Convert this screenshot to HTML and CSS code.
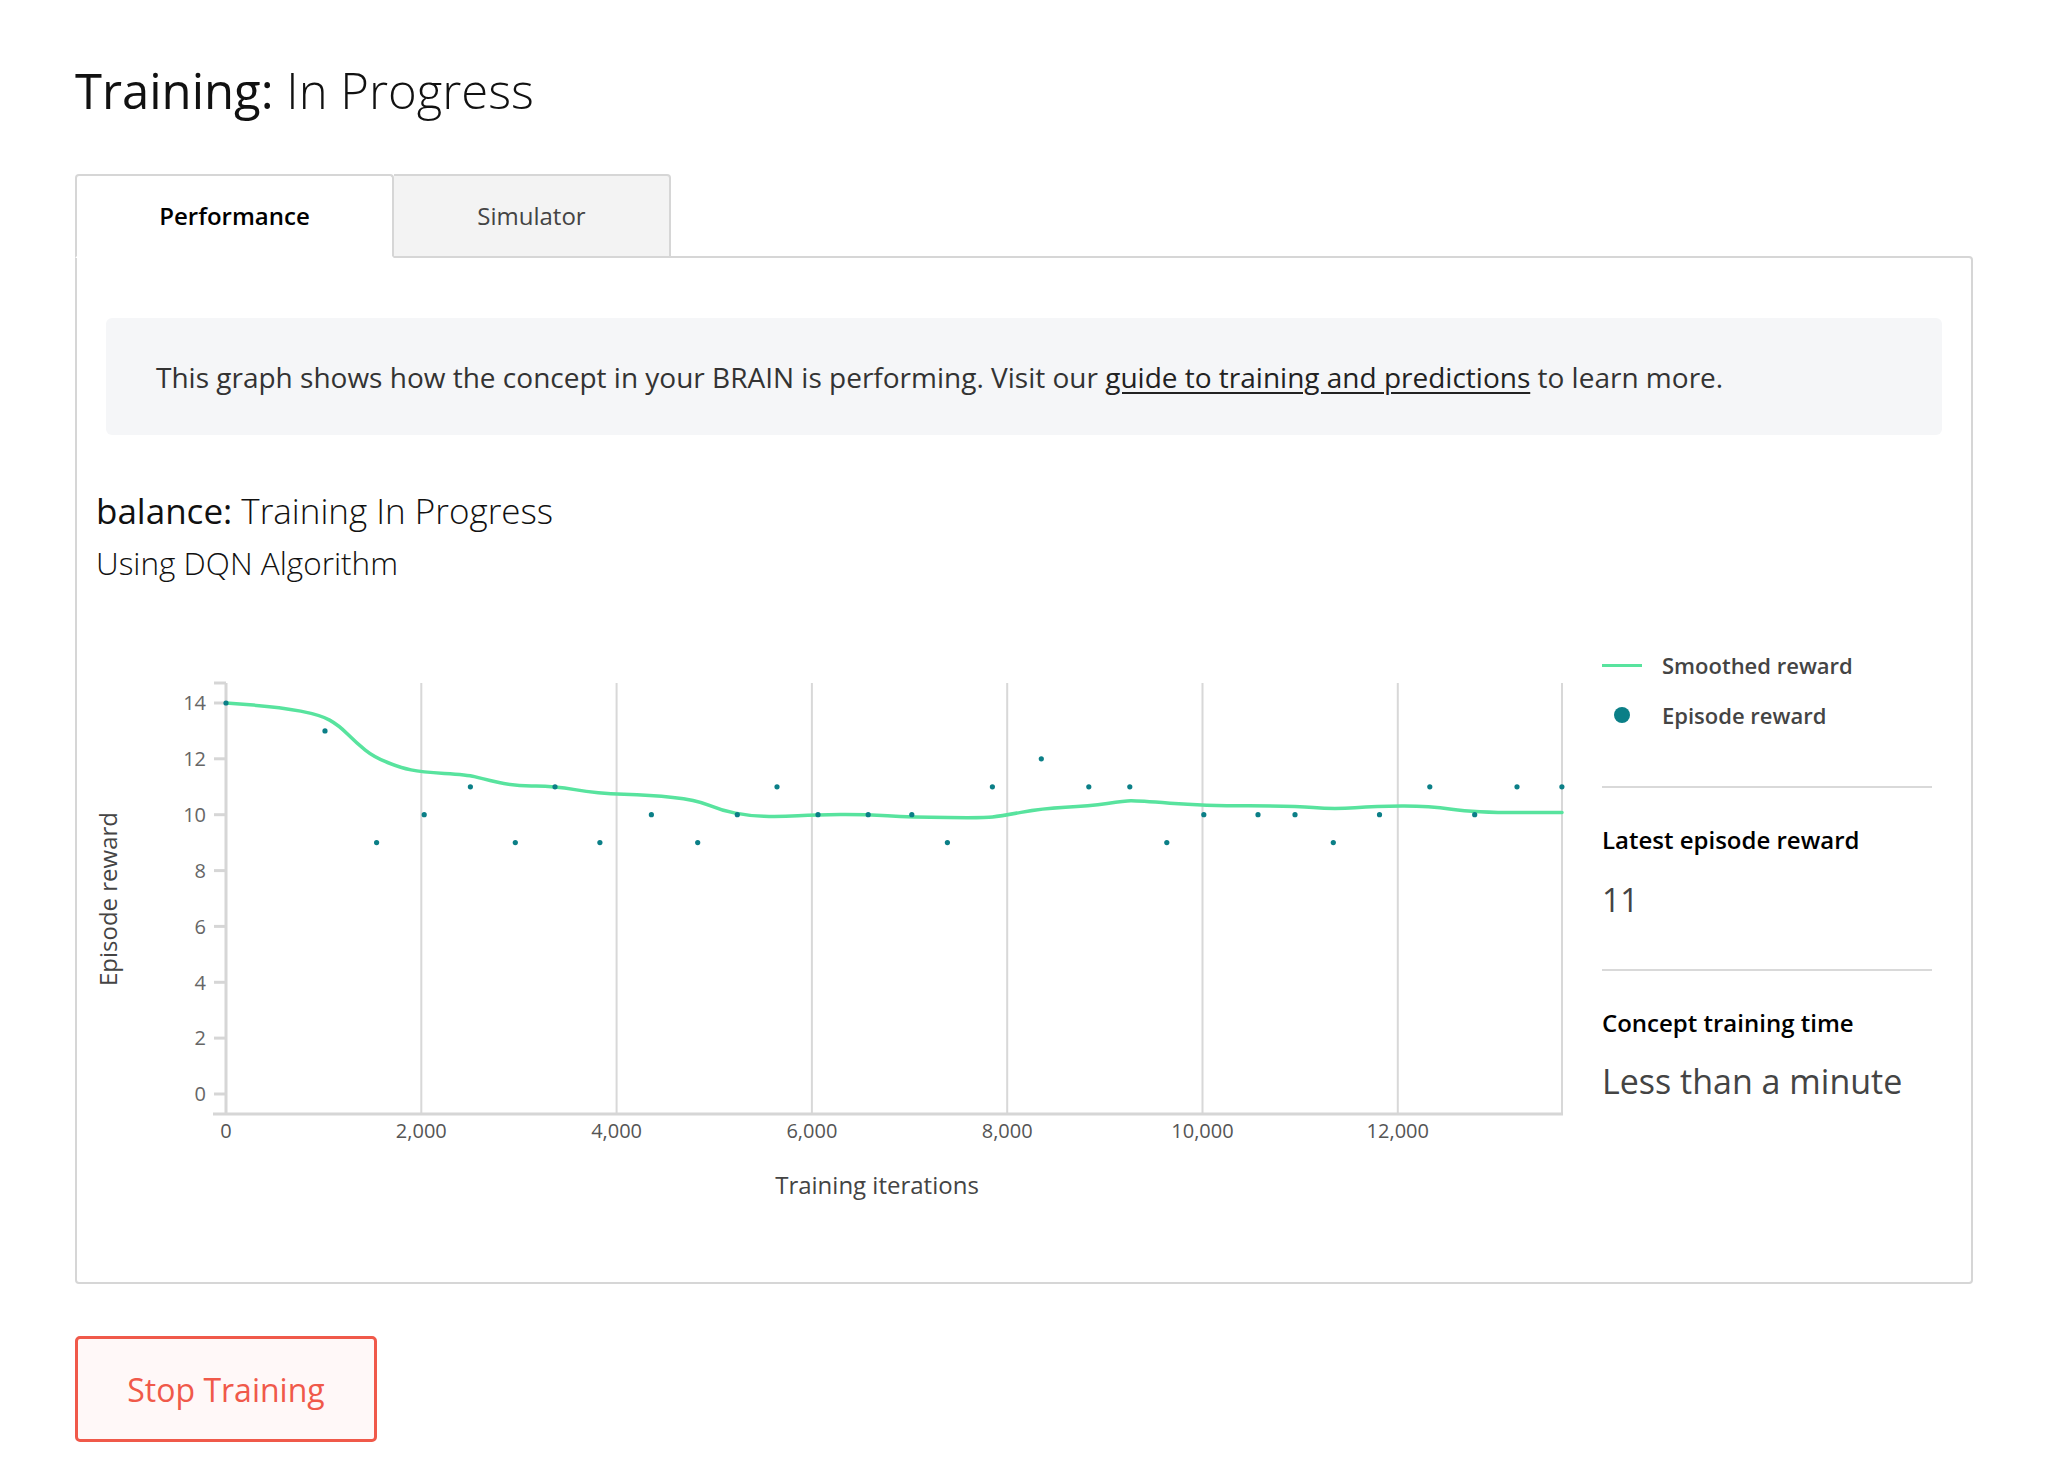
FILE: index.html
```html
<!DOCTYPE html>
<html lang="en">
<head>
<meta charset="utf-8">
<title>Training: In Progress</title>
<link rel="stylesheet" href="styles.css">
</head>
<body>
<div class="page">
  <h1 class="title"><span class="strong">Training:</span> In Progress</h1>
  <div class="tabs">
    <div class="tab tab-active">Performance</div>
    <div class="tab tab-inactive">Simulator</div>
  </div>
  <div class="panel">
    <div class="info">This graph shows how the concept in your BRAIN is performing. Visit our&nbsp;<a href="#" class="info-link">guide to training and predictions</a>&nbsp;to learn more.</div>
    <h2 class="concept"><span class="strong">balance:</span> Training In Progress</h2>
    <p class="algo">Using DQN Algorithm</p>
    <div class="chart-row">
      <svg class="chart" width="1490" height="580" viewBox="96 640 1490 580" xmlns="http://www.w3.org/2000/svg">
        <g class="grid">
          <line x1="421.3" y1="683" x2="421.3" y2="1114"/>
          <line x1="616.6" y1="683" x2="616.6" y2="1114"/>
          <line x1="811.9" y1="683" x2="811.9" y2="1114"/>
          <line x1="1007.2" y1="683" x2="1007.2" y2="1114"/>
          <line x1="1202.5" y1="683" x2="1202.5" y2="1114"/>
          <line x1="1397.8" y1="683" x2="1397.8" y2="1114"/>
          <line x1="1562" y1="683" x2="1562" y2="1114"/>
        </g>
        <g class="axis">
          <line x1="226" y1="683" x2="226" y2="1115"/>
          <line x1="213" y1="1114" x2="1563" y2="1114"/>
          <line x1="214" y1="683" x2="226" y2="683"/>
          <line x1="214" y1="703" x2="226" y2="703"/>
          <line x1="214" y1="758.8" x2="226" y2="758.8"/>
          <line x1="214" y1="814.7" x2="226" y2="814.7"/>
          <line x1="214" y1="870.6" x2="226" y2="870.6"/>
          <line x1="214" y1="926.4" x2="226" y2="926.4"/>
          <line x1="214" y1="982.3" x2="226" y2="982.3"/>
          <line x1="214" y1="1038.1" x2="226" y2="1038.1"/>
          <line x1="214" y1="1094" x2="226" y2="1094"/>
        </g>
        <g class="ylabels">
          <text x="206" y="703" dy="0.36em">14</text>
          <text x="206" y="758.8" dy="0.36em">12</text>
          <text x="206" y="814.7" dy="0.36em">10</text>
          <text x="206" y="870.6" dy="0.36em">8</text>
          <text x="206" y="926.4" dy="0.36em">6</text>
          <text x="206" y="982.3" dy="0.36em">4</text>
          <text x="206" y="1038.1" dy="0.36em">2</text>
          <text x="206" y="1094" dy="0.36em">0</text>
        </g>
        <g class="xlabels">
          <text x="226" y="1131" dy="0.36em">0</text>
          <text x="421.3" y="1131" dy="0.36em">2,000</text>
          <text x="616.6" y="1131" dy="0.36em">4,000</text>
          <text x="811.9" y="1131" dy="0.36em">6,000</text>
          <text x="1007.2" y="1131" dy="0.36em">8,000</text>
          <text x="1202.5" y="1131" dy="0.36em">10,000</text>
          <text x="1397.8" y="1131" dy="0.36em">12,000</text>
        </g>
        <text class="axis-title" x="877" y="1185" dy="0.36em">Training iterations</text>
        <text class="axis-title" transform="translate(108 899) rotate(-90)" dy="0.36em">Episode reward</text>
        <path class="smooth" d="M226,703 L253.3,705.1 Q280.6,707.2 300.65,711.15 Q320.7,715.1 329.65,720.1 Q338.6,725.1 347.5,734 Q356.4,742.9 365.3,750.05 Q374.2,757.2 387.6,762.5 Q401,767.8 411,769.9 Q421,772 444.45,773.4 Q467.9,774.8 474.45,776.6 Q481,778.4 497.85,782.3 Q514.7,786.2 533.65,785.95 Q552.6,785.7 574.9,789.6 Q597.2,793.5 623.95,794.35 Q650.7,795.2 672.95,797.4 Q695.2,799.6 708.6,805.05 Q722,810.5 735.35,813.15 Q748.7,815.8 763.85,816.35 Q779,816.9 798,815.8 Q817,814.7 840.5,814.55 Q864,814.4 887.5,815.8 Q911,817.2 948,817.6 Q985,818 992.5,817.05 Q1000,816.1 1021,812.35 Q1042,808.6 1065.5,807.35 Q1089,806.1 1107.25,803.55 Q1125.5,801 1130.75,800.85 Q1136,800.7 1170,803.25 Q1204,805.8 1248.3,805.8 Q1292.6,805.8 1313.3,807.6 Q1334,809.4 1355,807.75 Q1376,806.1 1402,805.95 Q1428,805.8 1451.5,809.15 Q1475,812.5 1518.5,812.5 L1562,812.5"/>
        <g class="dots">
          <circle cx="226" cy="703" r="2.6"/>
          <circle cx="325" cy="730.9" r="2.6"/>
          <circle cx="376.6" cy="842.6" r="2.6"/>
          <circle cx="424.2" cy="814.7" r="2.6"/>
          <circle cx="470.4" cy="786.8" r="2.6"/>
          <circle cx="515.3" cy="842.6" r="2.6"/>
          <circle cx="555" cy="786.8" r="2.6"/>
          <circle cx="599.9" cy="842.6" r="2.6"/>
          <circle cx="651.4" cy="814.7" r="2.6"/>
          <circle cx="697.7" cy="842.6" r="2.6"/>
          <circle cx="737.3" cy="814.7" r="2.6"/>
          <circle cx="777" cy="786.8" r="2.6"/>
          <circle cx="818" cy="814.7" r="2.6"/>
          <circle cx="868.2" cy="814.7" r="2.6"/>
          <circle cx="911.8" cy="814.7" r="2.6"/>
          <circle cx="947.4" cy="842.6" r="2.6"/>
          <circle cx="992.4" cy="786.8" r="2.6"/>
          <circle cx="1041.3" cy="758.8" r="2.6"/>
          <circle cx="1088.8" cy="786.8" r="2.6"/>
          <circle cx="1129.8" cy="786.8" r="2.6"/>
          <circle cx="1166.8" cy="842.6" r="2.6"/>
          <circle cx="1203.8" cy="814.7" r="2.6"/>
          <circle cx="1258" cy="814.7" r="2.6"/>
          <circle cx="1295" cy="814.7" r="2.6"/>
          <circle cx="1333.3" cy="842.6" r="2.6"/>
          <circle cx="1379.5" cy="814.7" r="2.6"/>
          <circle cx="1429.8" cy="786.8" r="2.6"/>
          <circle cx="1474.7" cy="814.7" r="2.6"/>
          <circle cx="1517" cy="786.8" r="2.6"/>
          <circle cx="1561.9" cy="786.8" r="2.6"/>
        </g>
      </svg>
      <div class="side">
        <div class="legend-item"><span class="swatch"><span class="swatch-line"></span></span>Smoothed reward</div>
        <div class="legend-item"><span class="swatch"><span class="swatch-dot"></span></span>Episode reward</div>
        <div class="divider"></div>
        <div class="stat-label">Latest episode reward</div>
        <div class="stat-value">11</div>
        <div class="divider divider-second"></div>
        <div class="stat-label">Concept training time</div>
        <div class="stat-value stat-value-large">Less than a minute</div>
      </div>
    </div>
  </div>
  <button class="stop" type="button">Stop Training</button>
</div>
</body>
</html>
```
FILE: styles.css
```css
html, body {
  margin: 0;
  padding: 0;
  background: #ffffff;
}
body {
  font-family: "Open Sans", "Liberation Sans", sans-serif;
  color: #222222;
}
.page {
  padding: 61px 0 40px 75px;
  width: 1898px;
}
.strong {
  font-weight: 500;
}
.title {
  margin: 0;
  font-size: 49px;
  line-height: 58px;
  font-weight: 300;
  color: #111111;
}
.tabs {
  display: flex;
  margin-top: 55px;
  margin-bottom: -2px;
  position: relative;
  z-index: 1;
}
.tab {
  box-sizing: border-box;
  height: 84px;
  display: flex;
  align-items: center;
  justify-content: center;
  font-size: 24px;
  border: 2px solid #d6d6d6;
  border-radius: 4px 4px 0 0;
}
.tab-active {
  width: 319px;
  background: #ffffff;
  border-bottom-color: #ffffff;
  font-weight: 600;
  color: #000000;
  padding-bottom: 2px;
}
.tab-inactive {
  width: 277px;
  background: #f3f3f3;
  border-left: none;
  color: #444444;
  border-radius: 0 4px 0 0;
  padding-bottom: 2px;
}
.panel {
  box-sizing: border-box;
  border: 2px solid #d6d6d6;
  border-radius: 0 4px 4px 4px;
  padding: 60px 29px 62px 19px;
}
.info {
  box-sizing: border-box;
  margin-left: 10px;
  height: 117px;
  padding: 0 50px;
  display: flex;
  align-items: center;
  background: #f5f6f8;
  border-radius: 6px;
  font-size: 28px;
  color: #333333;
}
.info-link {
  color: #222222;
  text-decoration: underline;
  text-underline-offset: 4px;
  text-decoration-thickness: 2px;
}
.concept {
  margin: 54px 0 0 0;
  font-size: 35px;
  line-height: 44px;
  font-weight: 300;
  color: #111111;
}
.algo {
  margin: 8px 0 0 0;
  font-size: 31.5px;
  line-height: 44px;
  font-weight: 300;
  color: #111111;
}
.chart-row {
  display: flex;
  gap: 16px;
  margin-top: 55px;
}
.chart {
  display: block;
  flex: none;
  overflow: visible;
}
.grid line {
  stroke: #d8d8d8;
  stroke-width: 2;
}
.axis line {
  stroke: #d6d6d6;
  stroke-width: 3;
}
.ylabels text {
  font-family: "Open Sans", sans-serif;
  font-size: 20px;
  fill: #666666;
  text-anchor: end;
}
.xlabels text {
  font-family: "Open Sans", sans-serif;
  font-size: 20px;
  fill: #555555;
  text-anchor: middle;
}
.axis-title {
  font-family: "Open Sans", sans-serif;
  font-size: 24px;
  fill: #444444;
  text-anchor: middle;
}
.smooth {
  fill: none;
  stroke: #58e39e;
  stroke-width: 3.5;
  stroke-linejoin: round;
  stroke-linecap: round;
}
.dots circle {
  fill: #0b7f87;
}
.side {
  width: 330px;
  flex: none;
}
.legend-item {
  display: flex;
  align-items: center;
  height: 50px;
  font-size: 22px;
  font-weight: 600;
  color: #444444;
}
.swatch {
  width: 60px;
  display: flex;
  align-items: center;
  flex: none;
}
.swatch-line {
  width: 40px;
  height: 3px;
  background: #58e39e;
}
.swatch-dot {
  width: 16px;
  height: 16px;
  border-radius: 50%;
  background: #0b7f87;
  margin-left: 12px;
}
.divider {
  height: 2px;
  background: #d9d9d9;
  margin-top: 46px;
}
.divider-second {
  margin-top: 47px;
}
.stat-label {
  margin-top: 36px;
  font-size: 24px;
  line-height: 32px;
  font-weight: 600;
  color: #000000;
}
.stat-value {
  margin-top: 22px;
  font-size: 32px;
  line-height: 44px;
  color: #444444;
}
.stat-value-large {
  margin-top: 19px;
  font-size: 34px;
  line-height: 46px;
}
.stop {
  display: block;
  margin-top: 52px;
  width: 302px;
  height: 106px;
  box-sizing: border-box;
  border: 3px solid #f0594a;
  border-radius: 5px;
  background: #fff8f8;
  color: #f0594a;
  font-family: "Open Sans", sans-serif;
  font-size: 32px;
  padding: 0;
}
```
